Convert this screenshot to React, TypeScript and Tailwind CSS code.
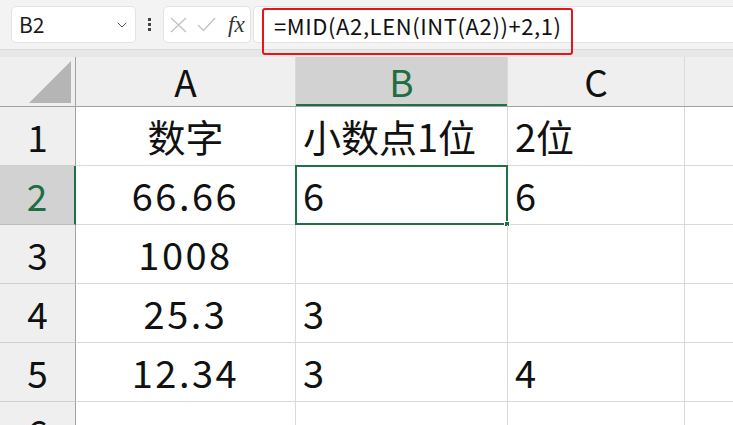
import { ChevronDown } from 'lucide-react';

const FONT = '"Noto Sans CJK SC", "Noto Sans", sans-serif';

type Row = { n: number; a: string; b: string; c: string };

const rows: Row[] = [
  { n: 1, a: '数字', b: '小数点1位', c: '2位' },
  { n: 2, a: '66.66', b: '6', c: '6' },
  { n: 3, a: '1008', b: '', c: '' },
  { n: 4, a: '25.3', b: '3', c: '' },
  { n: 5, a: '12.34', b: '3', c: '4' },
  { n: 6, a: '', b: '', c: '' },
];

function Toolbar() {
  return (
    <div className="relative">
      <div className="flex items-center h-[50px] bg-[#f3f3f3] border-b border-[#dadada] pl-[11px]">
        {/* name box */}
        <div className="flex items-center justify-between w-[125px] h-[37px] bg-white rounded-[5px] border border-[#e3e3e3] pl-[7px] pr-[5px]">
          <span className="text-[21px] text-[#1b1b1b] leading-none">B2</span>
          <ChevronDown size={16} strokeWidth={1.5} className="text-[#555]" />
        </div>
        {/* dots */}
        <div className="flex flex-col items-center justify-center gap-[2px] w-[27px]">
          <span className="w-[3px] h-[3px] bg-[#444]" />
          <span className="w-[3px] h-[3px] bg-[#444]" />
          <span className="w-[3px] h-[3px] bg-[#444]" />
        </div>
        {/* cancel / enter / fx */}
        <div className="flex items-center w-[88px] h-[37px] bg-white rounded-[5px] border border-[#e3e3e3] pl-[6px]">
          <svg width="17" height="16" viewBox="0 0 17 16" className="shrink-0">
            <path d="M1 1 L16 15 M16 1 L1 15" stroke="#c2c2c2" strokeWidth="1.3" fill="none" />
          </svg>
          <svg width="19" height="15" viewBox="0 0 19 15" className="shrink-0 ml-[10px]">
            <path d="M1 8 L6.5 13.5 L18 1" stroke="#c2c2c2" strokeWidth="1.3" fill="none" />
          </svg>
          <span
            className="ml-[12px] text-[23px] italic text-[#333] leading-none"
            style={{ fontFamily: '"Liberation Serif", "DejaVu Serif", serif' }}
          >
            fx
          </span>
        </div>
        {/* formula box */}
        <div className="flex-1 flex items-center h-[37px] bg-white rounded-l-[5px] border-l border-y border-[#e3e3e3] ml-[2px] pl-[20px]">
          <span className="text-[22px] tracking-[0.6px] text-[#111] leading-none">=MID(A2,LEN(INT(A2))+2,1)</span>
        </div>
      </div>
      {/* red highlight around the formula */}
      <div className="absolute left-[262px] top-[8px] w-[311px] h-[47px] border-2 border-[#e8141b] rounded-[3px]" />
      <div className="h-[7px] bg-[#e7e7e7]" />
    </div>
  );
}

function HeaderRow() {
  return (
    <div className="flex h-[50px] bg-[#efefef] border-b border-[#a3a3a3] text-[37px] text-[#111] leading-none">
      <div className="relative w-[76px] shrink-0 border-r border-[#a3a3a3]">
        <svg className="absolute right-[4px] bottom-[3px]" width="42" height="42" viewBox="0 0 42 42">
          <polygon points="42,0 42,42 0,42" fill="#b5b5b5" />
        </svg>
      </div>
      <div className="w-[220px] shrink-0 flex items-center justify-center border-r border-[#dadada]">A</div>
      <div className="w-[212px] shrink-0 flex items-center justify-center border-r border-[#dadada] bg-[#d2d2d2] text-[#1e6e42] shadow-[inset_0_-2px_0_#1e7145]">
        B
      </div>
      <div className="w-[177px] shrink-0 flex items-center justify-center border-r border-[#dadada]">C</div>
      <div className="flex-1" />
    </div>
  );
}

function DataRow({ r }: { r: Row }) {
  const active = r.n === 2;
  const numeric = /^[0-9.]+$/.test(r.a);
  return (
    <div className="flex h-[59px] text-[38px] text-[#111] leading-none">
      <div
        className={`w-[76px] shrink-0 flex items-center justify-center border-r border-b text-[37px] ${
          active
            ? 'bg-[#d2d2d2] text-[#1e6e42] border-r-[#1e7145] border-r-2 border-b-[#bdbdbd]'
            : 'bg-[#efefef] border-r-[#a3a3a3] border-b-[#d0d0d0]'
        }`}
      >
        {r.n}
      </div>
      <div
        className={`w-[220px] shrink-0 flex items-center justify-center border-r border-b border-[#dadada] ${
          numeric ? 'tracking-[2.5px]' : ''
        }`}
      >
        {r.a}
      </div>
      <div className="relative w-[212px] shrink-0 flex items-center pl-[7px] border-r border-b border-[#dadada]">
        {r.b}
        {active && (
          <>
            <div className="absolute -left-[1px] -top-[1px] -right-[1px] -bottom-[1px] border-2 border-[#1e7145]" />
            <div className="absolute -right-[3px] -bottom-[3px] w-[6px] h-[6px] bg-[#1e7145] border border-white" />
          </>
        )}
      </div>
      <div className="w-[177px] shrink-0 flex items-center pl-[7px] border-r border-b border-[#dadada]">{r.c}</div>
      <div className="flex-1 border-b border-[#dadada]" />
    </div>
  );
}

export default function App() {
  return (
    <div className="w-[733px] h-[425px] overflow-hidden bg-white" style={{ fontFamily: FONT }}>
      <Toolbar />
      <HeaderRow />
      {rows.map((r) => (
        <DataRow key={r.n} r={r} />
      ))}
    </div>
  );
}
